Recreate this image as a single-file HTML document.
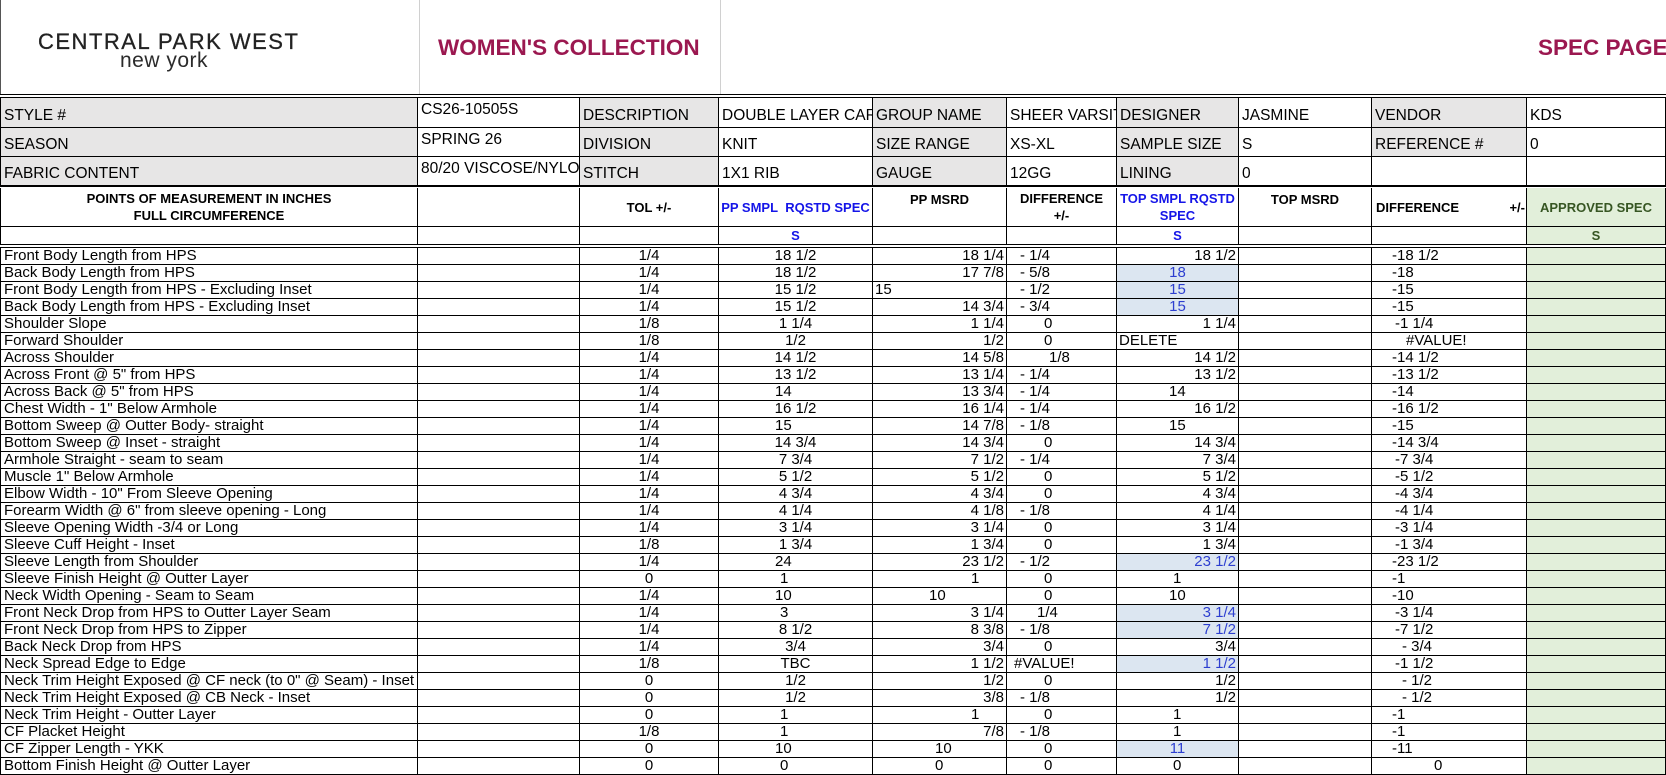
<!DOCTYPE html>
<html><head><meta charset="utf-8">
<style>
html,body{margin:0;padding:0;width:1666px;height:775px;overflow:hidden}
body{background:#fff;font-family:"Liberation Sans",sans-serif;color:#000}
#root{position:relative;width:1666px;height:775px;overflow:hidden}
.hdr{position:absolute;left:0;top:0;width:1666px;height:94px;border-left:1px solid #555;box-sizing:border-box}
.vl{position:absolute;top:0;height:94px;width:1px;background:#d0d0d0}
.logo1{position:absolute;left:37px;top:29px;font-size:22px;letter-spacing:1.5px;color:#222;white-space:nowrap;-webkit-text-stroke:0.3px #222}
.logo2{position:absolute;left:119px;top:49px;font-size:21px;letter-spacing:0.5px;color:#2b2b2b}
.title{position:absolute;top:35px;font-size:22.5px;font-weight:bold;color:#9b1850;white-space:nowrap}
.dbl{position:absolute;left:0;width:1666px;height:4px;box-sizing:border-box;border-top:1px solid #000;border-bottom:1px solid #000}
.row{position:absolute;left:0;width:1666px;display:grid;grid-template-columns:418px 162px 139px 154px 134px 110px 122px 133px 155px 139px}
.row>div{box-sizing:border-box;min-width:0;border-right:1px solid #000;border-bottom:1px solid #000;overflow:hidden;white-space:nowrap;font-size:15px;line-height:16px}
.row>div:first-child{border-left:1px solid #000}
.info>div{font-size:15.5px!important;padding:0 0 0 3px;display:flex;align-items:flex-end;padding-bottom:2px!important;line-height:18px!important}
.info>div.g{background:#e7e6e6}
.info>div.t{align-items:flex-start;padding-top:3px}
.hd>div{font-weight:bold;font-size:13px!important;text-align:center;line-height:17px!important;display:flex;align-items:center;justify-content:center}
.hd>div.tp{align-items:flex-start;padding-top:3px}
.b{color:#1515e8}
.gr{color:#375623;background:#e2efda}
.d>div{height:17px}
.c{text-align:center}.r{text-align:right;padding-right:2px}.l{text-align:left;padding-left:2px}
.bl{background:#dce6f1;color:#2d3fd0}
.n{padding-left:3px}
</style></head><body><div id="root">
<div class="hdr">
<div class="vl" style="left:418px"></div><div class="vl" style="left:719px"></div>
<div class="logo1">CENTRAL PARK WEST</div>
<div class="logo2">new york</div>
<div class="title" style="left:437px">WOMEN'S COLLECTION</div>
<div class="title" style="left:1537px">SPEC PAGE</div>
</div>
<div class="dbl" style="top:94px"></div>
<div class="row info" style="top:98px;height:30px"><div class="g">STYLE #</div><div class="t">CS26-10505S</div><div class="g">DESCRIPTION</div><div>DOUBLE LAYER CARDIGAN</div><div class="g">GROUP NAME</div><div>SHEER VARSITY</div><div class="g">DESIGNER</div><div>JASMINE</div><div class="g">VENDOR</div><div>KDS</div></div>
<div class="row info" style="top:128px;height:29px"><div class="g">SEASON</div><div class="t">SPRING 26</div><div class="g">DIVISION</div><div>KNIT</div><div class="g">SIZE RANGE</div><div>XS-XL</div><div class="g">SAMPLE SIZE</div><div>S</div><div class="g">REFERENCE #</div><div>0</div></div>
<div class="row info" style="top:157px;height:29px"><div class="g">FABRIC CONTENT</div><div class="t">80/20 VISCOSE/NYLON</div><div class="g">STITCH</div><div>1X1 RIB</div><div class="g">GAUGE</div><div>12GG</div><div class="g">LINING</div><div>0</div><div></div><div></div></div>
<div class="dbl" style="top:186px;height:3px;border-bottom:none"></div>
<div class="row hd" style="top:188px;height:39px"><div>POINTS OF MEASUREMENT IN INCHES<br>FULL CIRCUMFERENCE</div><div></div><div>TOL +/-</div><div class="b">PP SMPL&nbsp; RQSTD SPEC</div><div class="tp">PP MSRD</div><div>DIFFERENCE<br>+/-</div><div class="b">TOP SMPL RQSTD<br>SPEC</div><div class="tp">TOP MSRD</div><div style="justify-content:space-between;padding:0 1px 0 4px"><span>DIFFERENCE</span><span>+/-</span></div><div class="gr">APPROVED SPEC</div></div>
<div class="row hd" style="top:227px;height:18px"><div></div><div></div><div></div><div class="b">S</div><div></div><div></div><div class="b">S</div><div></div><div></div><div class="gr">S</div></div>
<div class="dbl" style="top:244px;height:4px;border-top:none"></div>
<div style="position:absolute;top:248px;left:0;width:1666px">
<div class="row d" style="position:relative"><div class="n">Front Body Length from HPS</div><div></div><div class="c">1/4</div><div class="c">18 1/2</div><div class="r">18 1/4</div><div style="padding-left:13px">- 1/4</div><div class="r">18 1/2</div><div></div><div style="padding-left:20px">-18 1/2</div><div class="gr"></div></div>
<div class="row d" style="position:relative"><div class="n">Back Body Length from HPS</div><div></div><div class="c">1/4</div><div class="c">18 1/2</div><div class="r">17 7/8</div><div style="padding-left:13px">- 5/8</div><div class="c bl">18</div><div></div><div style="padding-left:20px">-18</div><div class="gr"></div></div>
<div class="row d" style="position:relative"><div class="n">Front Body Length from HPS - Excluding Inset</div><div></div><div class="c">1/4</div><div class="c">15 1/2</div><div class="l">15</div><div style="padding-left:13px">- 1/2</div><div class="c bl">15</div><div></div><div style="padding-left:20px">-15</div><div class="gr"></div></div>
<div class="row d" style="position:relative"><div class="n">Back Body Length from HPS - Excluding Inset</div><div></div><div class="c">1/4</div><div class="c">15 1/2</div><div class="r">14 3/4</div><div style="padding-left:13px">- 3/4</div><div class="c bl">15</div><div></div><div style="padding-left:20px">-15</div><div class="gr"></div></div>
<div class="row d" style="position:relative"><div class="n">Shoulder Slope</div><div></div><div class="c">1/8</div><div class="c">1 1/4</div><div class="r">1 1/4</div><div style="padding-left:37px">0</div><div class="r">1 1/4</div><div></div><div style="padding-left:23px">-1 1/4</div><div class="gr"></div></div>
<div class="row d" style="position:relative"><div class="n">Forward Shoulder</div><div></div><div class="c">1/8</div><div class="c">1/2</div><div class="r">1/2</div><div style="padding-left:37px">0</div><div class="l">DELETE</div><div></div><div style="padding-left:34px">#VALUE!</div><div class="gr"></div></div>
<div class="row d" style="position:relative"><div class="n">Across Shoulder</div><div></div><div class="c">1/4</div><div class="c">14 1/2</div><div class="r">14 5/8</div><div style="padding-left:42px">1/8</div><div class="r">14 1/2</div><div></div><div style="padding-left:20px">-14 1/2</div><div class="gr"></div></div>
<div class="row d" style="position:relative"><div class="n">Across Front @ 5" from HPS</div><div></div><div class="c">1/4</div><div class="c">13 1/2</div><div class="r">13 1/4</div><div style="padding-left:13px">- 1/4</div><div class="r">13 1/2</div><div></div><div style="padding-left:20px">-13 1/2</div><div class="gr"></div></div>
<div class="row d" style="position:relative"><div class="n">Across Back @ 5" from HPS</div><div></div><div class="c">1/4</div><div style="padding-left:56px">14</div><div class="r">13 3/4</div><div style="padding-left:13px">- 1/4</div><div style="padding-left:52px">14</div><div></div><div style="padding-left:20px">-14</div><div class="gr"></div></div>
<div class="row d" style="position:relative"><div class="n">Chest Width - 1" Below Armhole</div><div></div><div class="c">1/4</div><div class="c">16 1/2</div><div class="r">16 1/4</div><div style="padding-left:13px">- 1/4</div><div class="r">16 1/2</div><div></div><div style="padding-left:20px">-16 1/2</div><div class="gr"></div></div>
<div class="row d" style="position:relative"><div class="n">Bottom Sweep @ Outter Body- straight</div><div></div><div class="c">1/4</div><div style="padding-left:56px">15</div><div class="r">14 7/8</div><div style="padding-left:13px">- 1/8</div><div style="padding-left:52px">15</div><div></div><div style="padding-left:20px">-15</div><div class="gr"></div></div>
<div class="row d" style="position:relative"><div class="n">Bottom Sweep @ Inset - straight</div><div></div><div class="c">1/4</div><div class="c">14 3/4</div><div class="r">14 3/4</div><div style="padding-left:37px">0</div><div class="r">14 3/4</div><div></div><div style="padding-left:20px">-14 3/4</div><div class="gr"></div></div>
<div class="row d" style="position:relative"><div class="n">Armhole Straight - seam to seam</div><div></div><div class="c">1/4</div><div class="c">7 3/4</div><div class="r">7 1/2</div><div style="padding-left:13px">- 1/4</div><div class="r">7 3/4</div><div></div><div style="padding-left:23px">-7 3/4</div><div class="gr"></div></div>
<div class="row d" style="position:relative"><div class="n">Muscle 1" Below Armhole</div><div></div><div class="c">1/4</div><div class="c">5 1/2</div><div class="r">5 1/2</div><div style="padding-left:37px">0</div><div class="r">5 1/2</div><div></div><div style="padding-left:23px">-5 1/2</div><div class="gr"></div></div>
<div class="row d" style="position:relative"><div class="n">Elbow Width - 10" From Sleeve Opening</div><div></div><div class="c">1/4</div><div class="c">4 3/4</div><div class="r">4 3/4</div><div style="padding-left:37px">0</div><div class="r">4 3/4</div><div></div><div style="padding-left:23px">-4 3/4</div><div class="gr"></div></div>
<div class="row d" style="position:relative"><div class="n">Forearm Width @ 6" from sleeve opening - Long</div><div></div><div class="c">1/4</div><div class="c">4 1/4</div><div class="r">4 1/8</div><div style="padding-left:13px">- 1/8</div><div class="r">4 1/4</div><div></div><div style="padding-left:23px">-4 1/4</div><div class="gr"></div></div>
<div class="row d" style="position:relative"><div class="n">Sleeve Opening Width -3/4 or Long</div><div></div><div class="c">1/4</div><div class="c">3 1/4</div><div class="r">3 1/4</div><div style="padding-left:37px">0</div><div class="r">3 1/4</div><div></div><div style="padding-left:23px">-3 1/4</div><div class="gr"></div></div>
<div class="row d" style="position:relative"><div class="n">Sleeve Cuff Height - Inset</div><div></div><div class="c">1/8</div><div class="c">1 3/4</div><div class="r">1 3/4</div><div style="padding-left:37px">0</div><div class="r">1 3/4</div><div></div><div style="padding-left:23px">-1 3/4</div><div class="gr"></div></div>
<div class="row d" style="position:relative"><div class="n">Sleeve Length from Shoulder</div><div></div><div class="c">1/4</div><div style="padding-left:56px">24</div><div class="r">23 1/2</div><div style="padding-left:13px">- 1/2</div><div class="r bl">23 1/2</div><div></div><div style="padding-left:20px">-23 1/2</div><div class="gr"></div></div>
<div class="row d" style="position:relative"><div class="n">Sleeve Finish Height @ Outter Layer</div><div></div><div class="c">0</div><div style="padding-left:61px">1</div><div style="padding-left:98px">1</div><div style="padding-left:37px">0</div><div style="padding-left:56px">1</div><div></div><div style="padding-left:20px">-1</div><div class="gr"></div></div>
<div class="row d" style="position:relative"><div class="n">Neck Width Opening - Seam to Seam</div><div></div><div class="c">1/4</div><div style="padding-left:56px">10</div><div style="padding-left:56px">10</div><div style="padding-left:37px">0</div><div style="padding-left:52px">10</div><div></div><div style="padding-left:20px">-10</div><div class="gr"></div></div>
<div class="row d" style="position:relative"><div class="n">Front Neck Drop from HPS to Outter Layer Seam</div><div></div><div class="c">1/4</div><div style="padding-left:61px">3</div><div class="r">3 1/4</div><div style="padding-left:30px">1/4</div><div class="r bl">3 1/4</div><div></div><div style="padding-left:23px">-3 1/4</div><div class="gr"></div></div>
<div class="row d" style="position:relative"><div class="n">Front Neck Drop from HPS to Zipper</div><div></div><div class="c">1/4</div><div class="c">8 1/2</div><div class="r">8 3/8</div><div style="padding-left:13px">- 1/8</div><div class="r bl">7 1/2</div><div></div><div style="padding-left:23px">-7 1/2</div><div class="gr"></div></div>
<div class="row d" style="position:relative"><div class="n">Back Neck Drop from HPS</div><div></div><div class="c">1/4</div><div class="c">3/4</div><div class="r">3/4</div><div style="padding-left:37px">0</div><div class="r">3/4</div><div></div><div style="padding-left:30px">- 3/4</div><div class="gr"></div></div>
<div class="row d" style="position:relative"><div class="n">Neck Spread Edge to Edge</div><div></div><div class="c">1/8</div><div class="c">TBC</div><div class="r">1 1/2</div><div style="padding-left:7px">#VALUE!</div><div class="r bl">1 1/2</div><div></div><div style="padding-left:23px">-1 1/2</div><div class="gr"></div></div>
<div class="row d" style="position:relative"><div class="n">Neck Trim Height Exposed @ CF neck (to 0" @ Seam) - Inset</div><div></div><div class="c">0</div><div class="c">1/2</div><div class="r">1/2</div><div style="padding-left:37px">0</div><div class="r">1/2</div><div></div><div style="padding-left:30px">- 1/2</div><div class="gr"></div></div>
<div class="row d" style="position:relative"><div class="n">Neck Trim Height Exposed @ CB Neck - Inset</div><div></div><div class="c">0</div><div class="c">1/2</div><div class="r">3/8</div><div style="padding-left:13px">- 1/8</div><div class="r">1/2</div><div></div><div style="padding-left:30px">- 1/2</div><div class="gr"></div></div>
<div class="row d" style="position:relative"><div class="n">Neck Trim Height - Outter Layer</div><div></div><div class="c">0</div><div style="padding-left:61px">1</div><div style="padding-left:98px">1</div><div style="padding-left:37px">0</div><div style="padding-left:56px">1</div><div></div><div style="padding-left:20px">-1</div><div class="gr"></div></div>
<div class="row d" style="position:relative"><div class="n">CF Placket Height</div><div></div><div class="c">1/8</div><div style="padding-left:61px">1</div><div class="r">7/8</div><div style="padding-left:13px">- 1/8</div><div style="padding-left:56px">1</div><div></div><div style="padding-left:20px">-1</div><div class="gr"></div></div>
<div class="row d" style="position:relative"><div class="n">CF Zipper Length - YKK</div><div></div><div class="c">0</div><div style="padding-left:56px">10</div><div style="padding-left:62px">10</div><div style="padding-left:37px">0</div><div class="c bl">11</div><div></div><div style="padding-left:20px">-11</div><div class="gr"></div></div>
<div class="row d" style="position:relative"><div class="n">Bottom Finish Height @ Outter Layer</div><div></div><div class="c">0</div><div style="padding-left:61px">0</div><div style="padding-left:62px">0</div><div style="padding-left:37px">0</div><div style="padding-left:56px">0</div><div></div><div style="padding-left:62px">0</div><div class="gr"></div></div>
</div>
</div></body></html>
